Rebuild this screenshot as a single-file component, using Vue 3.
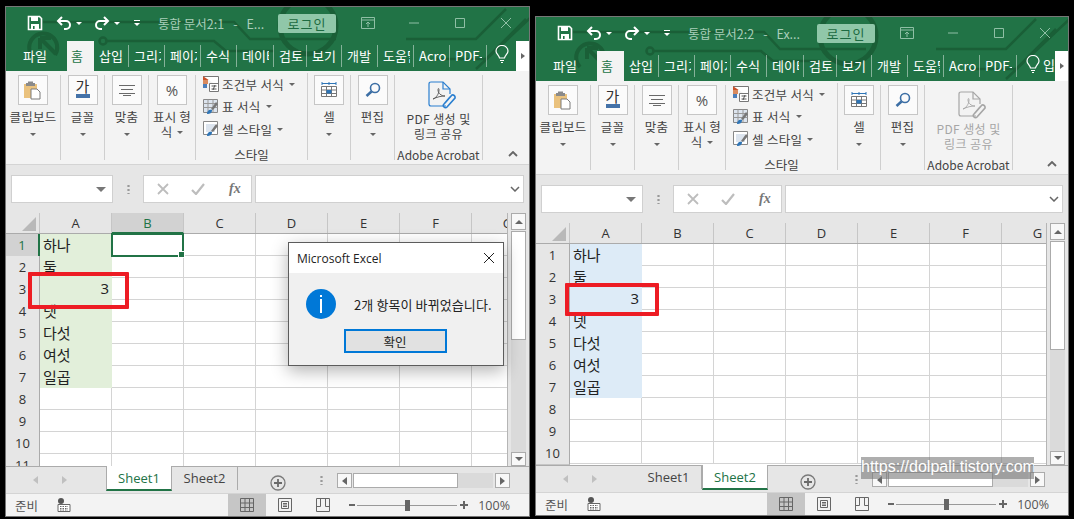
<script setup>
const cols = ['A', 'B', 'C', 'D', 'E', 'F', 'G']
const values = ['하나', '둘', '3', '넷', '다섯', '여섯', '일곱']
const tabs = [
  { t: '파일', c: 'file' }, { t: '홈', c: 'on' }, { t: '삽입', c: 'w35' }, { t: '그리기', c: 'w36' },
  { t: '페이지', c: 'w36' }, { t: '수식', c: 'w36' }, { t: '데이터', c: 'w37' }, { t: '검토', c: 'w33' },
  { t: '보기', c: 'w35' }, { t: '개발', c: 'w36' }, { t: '도움말', c: 'w36' }, { t: 'Acrobat', c: 'w36' },
  { t: 'PDF-XChange', c: 'w37' }
]
const windows = [
  { id: 1, title: '통합 문서2:1', suffix: 'E...', rows: 11, shade: 'green', pdfOff: false, active: 1 },
  { id: 2, title: '통합 문서2:2', suffix: 'Ex...', rows: 10, shade: 'blue', pdfOff: true, active: 2 }
]
</script>

<template>
  <div class="desk">
    <div v-for="w in windows" :key="w.id" class="win" :class="'win' + w.id">
      <svg class="circuit" viewBox="0 0 540 64" width="540" height="64">
        <g fill="none" stroke="#1a5f37" stroke-width="2.500">
          <path d="M37 15H228l16 17H330" />
          <g :transform="w.id === 1 ? '' : 'translate(17 0)'">
            <path d="M27 50a14 14 0 1 1 22 -2" stroke-width="4" />
            <path d="M34 31l16 16M34 31h11M34 31v11" stroke-width="4" />
            <circle cx="97" cy="34" r="3.500" />
            <path d="M101 34H208l12 10H268" />
          </g>
          <circle :cx="w.id === 1 ? 302 : 312" cy="19" r="28" stroke-width="5" />
          <path d="M400 32H470L500 2M430 52H480L520 12M470 62L540 -4" />
        </g>
      </svg>

      <div class="titlebar">
        <svg class="qat-save" viewBox="0 0 16 16" width="16" height="16">
          <path d="M1.500 1.500h11l2 2v11h-13z" fill="none" stroke="#fff" stroke-width="1.600" />
          <path d="M4 1h7v5H4zM4 9h8v6H4z" fill="#fff" />
          <path d="M6 11h1.600v3H6z" fill="#217346" />
        </svg>
        <svg class="qat-undo" viewBox="0 0 16 16" width="16" height="16">
          <path d="M6 2L2 6l4 4M2 6h8a4 4 0 0 1 0 8H8" fill="none" stroke="#fff" stroke-width="2" />
        </svg>
        <i class="caret white undo-caret"></i>
        <svg class="qat-redo" viewBox="0 0 16 16" width="16" height="16">
          <path d="M10 2l4 4-4 4M14 6H6a4 4 0 0 0 0 8h2" fill="none" stroke="#fff" stroke-width="2" />
        </svg>
        <i class="caret white redo-caret"></i>
        <span class="qat-more"></span>
        <span class="doc-title">{{ w.title }}<span class="dash">-</span>{{ w.suffix }}</span>
        <button class="login">로그인</button>
        <svg class="wc first" viewBox="0 0 14 12" width="14" height="12">
          <path d="M.5.5h13v11H.5zM.5 3h13M7 10V5M5 7l2-2 2 2" fill="none" stroke="#8fbfa5" />
        </svg>
        <svg class="wc" viewBox="0 0 14 12" width="14" height="12"><path d="M2 6h10" stroke="#8fbfa5" /></svg>
        <svg class="wc" viewBox="0 0 14 12" width="14" height="12"><path d="M2.500 1.500h9v9h-9z" fill="none" stroke="#8fbfa5" /></svg>
        <svg class="wc" viewBox="0 0 14 12" width="14" height="12"><path d="M2 1l10 10M12 1L2 11" stroke="#8fbfa5" /></svg>
      </div>

      <div class="tabs">
        <div v-for="t in tabs" :key="t.t" class="tab" :class="t.c"><span>{{ t.t }}</span></div>
        <svg class="bulb" viewBox="0 0 14 18" width="14" height="18">
          <path d="M4.500 13C4 10 1 9 1 6a6 5.500 0 0 1 12 0c0 3-3 4-3.500 7zM5 15.500h4M6 17.500h2" fill="none" stroke="#fff" stroke-width="1.200" />
        </svg>
        <span v-if="w.id === 2" class="tell">입</span>
        <div class="tab-next"><i></i></div>
      </div>

      <div class="ribbon">
        <div class="group g55">
          <div class="big">
            <svg viewBox="0 0 20 20" width="20" height="20">
              <path d="M1 4h13v14H1z" fill="#eac27e" />
              <path d="M5 1.500h5V3h2v3H3V3h2z" fill="#8a8a8a" />
              <path d="M8 9h6l3 3v7H8z" fill="#fff" stroke="#7a7a7a" />
            </svg>
          </div>
          <div class="label">클립보드</div>
          <i class="caret"></i>
        </div>
        <div class="group g44">
          <div class="big font-btn"><span>가</span><b></b></div>
          <div class="label">글꼴</div>
          <i class="caret"></i>
        </div>
        <div class="group g44">
          <div class="big">
            <svg viewBox="0 0 16 12" width="16" height="12">
              <path d="M0 1.500h16M2 5.500h12M0 9.500h16M4 11.500h8" stroke="#6a6a6a" />
            </svg>
          </div>
          <div class="label">맞춤</div>
          <i class="caret"></i>
        </div>
        <div class="group g47">
          <div class="big pct">%</div>
          <div class="label wrap">표시 형<br />식<i class="caret inline"></i></div>
        </div>
        <div class="group g112 styles">
          <div class="style-row">
            <svg viewBox="0 0 16 16" width="16" height="16">
              <path d="M0 0h7v4H0z" fill="#c8502a" />
              <path d="M0 4h5v4H0z" fill="#d98a5e" />
              <path d="M0 8h4v4H0z" fill="#4a7ebb" />
              <path d="M.5.500h15v10M6.500 7.500h9v8h-9z" fill="#fff" stroke="#777" />
              <path d="M8.500 10h5M8.500 13h5M12 9l-2 5" stroke="#555" />
            </svg>
            <span>조건부 서식</span><i class="caret inline"></i>
          </div>
          <div class="style-row">
            <svg viewBox="0 0 16 16" width="16" height="16">
              <path d="M.5.500h14v13H.5z" fill="#dce4ee" stroke="#888" />
              <path d="M.5 4.500h14M.5 8.500h14M5 .5v13M10 .5v13" stroke="#999" />
              <path d="M15 5l-5 6-2-1 5-7z" fill="#777" />
              <path d="M4 15c0-3 2-5 5-4 0 3-2 4-5 4z" fill="#2e75b6" />
            </svg>
            <span>표 서식</span><i class="caret inline"></i>
          </div>
          <div class="style-row">
            <svg viewBox="0 0 16 16" width="16" height="16">
              <path d="M.5.500h14v13H.5z" fill="#fff" stroke="#888" />
              <path d="M3 3h9v8H3z" fill="#dce4ee" />
              <path d="M15 5l-5 6-2-1 5-7z" fill="#777" />
              <path d="M4 15c0-3 2-5 5-4 0 3-2 4-5 4z" fill="#2e75b6" />
            </svg>
            <span>셀 스타일</span><i class="caret inline"></i>
          </div>
          <div class="group-name">스타일</div>
        </div>
        <div class="group g43">
          <div class="big">
            <svg viewBox="0 0 16 18" width="16" height="18">
              <path d="M.5 5.500h15v10H.5zM.5 9h15M.5 12.500h15M5.500 5.500v10M10.500 5.500v10" fill="#fff" stroke="#777" />
              <path d="M5.500 9h5v3.500h-5z" fill="#2e75b6" />
              <path d="M1 2.500h14M1 1v3M15 1v3M8 1v3" stroke="#2e75b6" />
            </svg>
          </div>
          <div class="label">셀</div>
          <i class="caret"></i>
        </div>
        <div class="group g44">
          <div class="big">
            <svg viewBox="0 0 16 16" width="16" height="16">
              <circle cx="10" cy="6" r="4.500" fill="none" stroke="#3d6fa5" stroke-width="1.600" />
              <path d="M6.500 9.500L1.500 14" stroke="#3d6fa5" stroke-width="2.600" />
            </svg>
          </div>
          <div class="label">편집</div>
          <i class="caret"></i>
        </div>
        <div class="group g88 acrobat" :class="{ off: w.pdfOff }">
          <svg class="pdf-icon" viewBox="0 0 28 30" width="28" height="30">
            <g fill="none" :stroke="w.pdfOff ? '#a6a6a6' : '#2a7fd0'" stroke-width="1.200">
              <path d="M18 25H3q-2 0-2-2V3q0-2 2-2h12l7 7v5" />
              <path d="M15 1v7h7" />
              <path d="M5 18c3-1 6-5 6-9 0-2-1-2-1 0 0 3 3 6 7 6-4 0-8 1-12 3z" :stroke="w.pdfOff ? '#a6a6a6' : '#555'" stroke-width=".9" />
              <path d="M17 22l7-8a2.500 2.500 0 0 1 3 3l-8 9a2 2 0 0 1-3-3l6-7" stroke-width="1.600" />
            </g>
          </svg>
          <div class="pdf-label">PDF 생성 및<br />링크 공유</div>
          <div class="group-name">Adobe Acrobat</div>
        </div>
        <svg class="collapse" viewBox="0 0 10 6" width="10" height="6">
          <path d="M1 5l4-4 4 4" fill="none" stroke="#666" stroke-width="1.800" />
        </svg>
      </div>

      <div class="formula">
        <div class="namebox"><i class="caret grey"></i></div>
        <span class="vdots"></span>
        <div class="fxbox">
          <svg viewBox="0 0 12 12" width="12" height="12"><path d="M1 1l10 10M11 1L1 11" stroke="#bdbdbd" stroke-width="1.800" /></svg>
          <svg viewBox="0 0 14 12" width="14" height="12"><path d="M1 7l4 4 8-10" fill="none" stroke="#bdbdbd" stroke-width="2.200" /></svg>
          <em>fx</em>
        </div>
        <div class="input">
          <svg viewBox="0 0 10 6" width="10" height="6"><path d="M1 1l4 4 4-4" fill="none" stroke="#666" stroke-width="1.500" /></svg>
        </div>
      </div>

      <div class="sheet-wrap">
        <div class="sheet">
          <div class="head-row">
            <div class="corner"><b></b></div>
            <div v-for="c in cols" :key="c" class="col-head" :class="{ sel: w.active === 1 && c === 'B' }">{{ c }}</div>
          </div>
          <div v-for="r in w.rows" :key="r" class="row">
            <div class="row-head" :class="{ sel: w.active === 1 && r === 1 }">{{ r }}</div>
            <div
              v-for="c in cols"
              :key="c"
              class="cell"
              :class="[c === 'A' && r <= 7 ? w.shade : '', { num: c === 'A' && r === 3 }]"
            >
              <template v-if="c === 'A' && r <= 7">{{ values[r - 1] }}</template>
              <div v-if="w.active === 1 && c === 'B' && r === 1" class="selected"><b></b></div>
            </div>
          </div>
        </div>
        <div class="vscroll">
          <div class="vbtn"><i class="tri up"></i></div>
          <div class="vthumb"></div>
          <div class="vtrack"></div>
          <div class="vbtn last"><i class="tri"></i></div>
        </div>
      </div>

      <div class="sheetbar">
        <div class="nav"><i class="tri left"></i><i class="tri right"></i></div>
        <div class="stab" :class="{ on: w.active === 1 }">Sheet1</div>
        <div class="stab" :class="{ on: w.active === 2 }">Sheet2</div>
        <div class="plus">
          <svg viewBox="0 0 16 16" width="16" height="16">
            <circle cx="8" cy="8" r="7" fill="none" stroke="#7a7a7a" stroke-width="1.300" />
            <path d="M4 8h8M8 4v8" stroke="#6a6a6a" stroke-width="1.800" />
          </svg>
        </div>
        <span class="vdots small"></span>
        <div class="hscroll">
          <div class="hbtn"><i class="tri left dark"></i></div>
          <div class="hthumb"></div>
          <div class="htrack"></div>
          <div class="hbtn"><i class="tri right dark"></i></div>
        </div>
      </div>

      <div class="statusbar">
        <span class="ready">준비</span>
        <svg class="macro" viewBox="0 0 14 14" width="14" height="14">
          <circle cx="4" cy="3" r="3" fill="#555" />
          <path d="M1 6.500h12v7H1z" fill="#fff" stroke="#666" />
          <path d="M3 8.500h8M3 10.500h8M3 12h8" stroke="#666" stroke-dasharray="1.500 1" />
        </svg>
        <div class="views">
          <div class="view on">
            <svg viewBox="0 0 14 14" width="14" height="14"><path d="M.5.500h13v13H.5zM.5 5h13M.5 9.500h13M5 .5v13M9.500.5v13" fill="none" stroke="#666" /></svg>
          </div>
          <div class="view">
            <svg viewBox="0 0 14 14" width="14" height="14"><path d="M.5.500h13v13H.5zM3.500 3.500h7v7h-7zM5 5.500h4M5 7h4M5 8.500h4" fill="none" stroke="#666" /></svg>
          </div>
          <div class="view">
            <svg viewBox="0 0 14 14" width="14" height="14"><path d="M.5.500h13v13H.5zM.5 8.500h4V.5M9.500.5v8h4" fill="none" stroke="#666" /></svg>
          </div>
        </div>
        <div class="zoombar">
          <b class="minus"></b>
          <div class="slider"><u></u></div>
          <b class="pls"></b>
        </div>
        <span class="percent">100%</span>
      </div>

      <div class="redbox"></div>

      <div v-if="w.id === 1" class="dialog">
        <div class="dlg-title">
          <span>Microsoft Excel</span>
          <svg viewBox="0 0 12 12" width="12" height="12"><path d="M1 1l10 10M11 1L1 11" stroke="#222" /></svg>
        </div>
        <div class="dlg-body">
          <div class="dlg-msg">
            <div class="info"><i></i><b></b></div>
            <span>2개 항목이 바뀌었습니다.</span>
          </div>
          <button class="ok">확인</button>
        </div>
      </div>

      <div v-if="w.id === 2" class="watermark">https://dolpali.tistory.com</div>
    </div>
  </div>
</template>

<style>
html, body {
  margin: 0;
  background: #000;
}
</style>

<style scoped>
.desk {
  display: flex;
  align-items: flex-start;
  gap: 5px;
  width: 1074px;
  height: 519px;
  padding-left: 5px;
  box-sizing: border-box;
  overflow: hidden;
  background: #000;
  font-family: "Noto Sans CJK KR", "Noto Sans", sans-serif;
  color: #333;
}
.win {
  position: relative;
  display: flex;
  flex-direction: column;
  box-sizing: border-box;
  border: 1px solid #777;
  background: #e6e6e6;
  overflow: hidden;
}
.win1 { width: 525px; height: 511px; margin-top: 6px; }
.win2 { width: 534px; height: 500px; margin-top: 16px; }
.circuit { position: absolute; left: 0; top: 0; z-index: 0; }

.titlebar, .tabs { position: relative; background: transparent; }
.win::before {
  content: "";
  position: absolute;
  left: 0; right: 0; top: 0;
  height: 64px;
  background: #217346;
}
.titlebar {
  display: flex;
  align-items: center;
  height: 34px;
  flex: none;
  padding-bottom: 2px;
  box-sizing: border-box;
}
.qat-save { margin-left: 21px; }
.qat-undo { margin-left: 13px; }
.qat-redo { margin-left: 12px; }
.undo-caret { margin-left: 4px; }
.redo-caret { margin-left: 4px; }
.qat-more {
  width: 6px;
  height: 5px;
  margin-left: 14px;
  border-top: 1px solid #fff;
  position: relative;
}
.qat-more::after {
  content: "";
  position: absolute;
  left: 0; top: 2px;
  border: 3px solid transparent;
  border-top-color: #fff;
}
.doc-title {
  margin-left: 18px;
  font-size: 12.500px;
  color: #a9cfba;
  white-space: nowrap;
}
.dash { margin: 0 9px; }
.login {
  margin-left: auto;
  width: 58px;
  height: 19px;
  padding: 0;
  border: 0;
  border-radius: 2px;
  background: #90c7a9;
  color: #1d6a41;
  font: 13px "Noto Sans CJK KR", sans-serif;
  letter-spacing: 1px;
}
.wc { margin-left: 32px; flex: none; }
.wc.first { margin-left: 25px; }
.wc:last-child { margin-right: 16px; }

.caret {
  display: inline-block;
  width: 0;
  height: 0;
  border: 3px solid transparent;
  border-top: 3px solid #666;
  border-bottom: 0;
}
.caret.white { border-top-color: #fff; }
.caret.grey { border-width: 5px 5px 0; border-top-color: #777; }
.caret.inline { margin-left: 5px; vertical-align: 3px; }

.tabs {
  display: flex;
  height: 30px;
  flex: none;
  font-size: 13px;
  color: #fff;
}
.tab {
  position: relative;
  display: flex;
  align-items: center;
  overflow: hidden;
  white-space: nowrap;
  padding: 0 0 2px 5px;
  box-sizing: border-box;
}
.tab span { display: block; max-width: 27px; overflow: hidden; }
.tab::after {
  content: "";
  position: absolute;
  right: 0; top: 4px; bottom: 4px;
  width: 1px;
  background: rgba(255, 255, 255, .45);
}
.tab.file { width: 61px; padding-left: 17px; }
.tab.file::after, .tab.on::after { display: none; }
.tab.on {
  width: 27px;
  background: #f3f3f3;
  color: #217346;
  padding-left: 4px;
}
.w33 { width: 33px; }
.w35 { width: 35px; }
.w36 { width: 36px; }
.w37 { width: 37px; }
.bulb { margin: 4px 0 0 8px; flex: none; }
.tell { margin-left: 3px; line-height: 27px; white-space: nowrap; }
.win2 .bulb { margin-left: 9px; }
.tab-next {
  position: absolute;
  right: 0; top: 0; bottom: 0;
  width: 13px;
  display: flex;
  align-items: center;
  justify-content: center;
  background: #fff;
}
.tab-next i {
  border: 3px solid transparent;
  border-left: 4px solid #666;
  border-right: 0;
}

.ribbon {
  position: relative;
  display: flex;
  flex: none;
  height: 94px;
  padding: 4px 0 4px;
  box-sizing: border-box;
  background: #f3f3f3;
  border-bottom: 1px solid #d4d4d4;
  font-size: 12.500px;
  color: #444;
}
.group {
  position: relative;
  display: flex;
  flex-direction: column;
  align-items: center;
  box-sizing: border-box;
  border-right: 1px solid #cfcfcf;
  height: 85px;
}
.g43 { width: 43px; }
.g44 { width: 44px; }
.g47 { width: 47px; }
.g55 { width: 55px; }
.g88 { width: 88px; }
.g112 { width: 112px; }
.big {
  display: flex;
  align-items: center;
  justify-content: center;
  width: 30px;
  height: 30px;
  box-sizing: border-box;
  border: 1px solid #c6c6c6;
  background: #fbfbfb;
  flex: none;
}
.font-btn { position: relative; font-size: 15px; line-height: 1; padding-bottom: 9px; color: #333; }
.font-btn b {
  position: absolute;
  left: 7px; right: 7px; bottom: 6px;
  height: 4px;
  background: #4472a8;
}
.pct { font: 15px "Open Sans", sans-serif; color: #555; }
.label {
  margin-top: 2px;
  height: 19px;
  line-height: 19px;
  white-space: nowrap;
  letter-spacing: .2px;
}
.label + .caret { margin-top: 7px; }
.label.wrap { height: auto; line-height: 15px; margin-top: 4px; text-align: center; }
.styles { align-items: flex-start; padding-left: 7px; margin-top: -2px; height: 87px; }
.style-row {
  display: flex;
  align-items: center;
  height: 22.500px;
  white-space: nowrap;
  letter-spacing: .3px;
}
.style-row span { margin-left: 3px; }
.group-name {
  position: absolute;
  left: 0; right: 0; bottom: -3px;
  text-align: center;
  line-height: 16px;
  font-size: 12.500px;
  white-space: nowrap;
}
.acrobat .group-name { color: #444; font-size: 12px; }
.pdf-icon { margin: 6px 0 0 6px; }
.pdf-label {
  margin-top: 0;
  line-height: 15px;
  text-align: center;
  font-size: 12px;
  letter-spacing: .4px;
}
.acrobat.off .pdf-label { color: #a6a6a6; }
.collapse { position: absolute; right: 11px; bottom: 7px; }

.formula {
  display: flex;
  flex: none;
  align-items: center;
  height: 48px;
  padding: 0 5px;
  box-sizing: border-box;
}
.namebox {
  display: flex;
  align-items: center;
  justify-content: flex-end;
  width: 102px;
  height: 28px;
  box-sizing: border-box;
  padding-right: 6px;
  background: #fff;
  border: 1px solid #d0d0d0;
}
.vdots {
  width: 3px;
  height: 10px;
  margin: 0 13px 0 14px;
  background: radial-gradient(circle, #999 1px, transparent 1.300px) 0 0 / 3px 4px;
  flex: none;
}
.fxbox {
  display: flex;
  align-items: center;
  width: 109px;
  height: 28px;
  box-sizing: border-box;
  padding-left: 13px;
  background: #fff;
  border: 1px solid #d0d0d0;
}
.fxbox svg + svg { margin-left: 22px; }
.fxbox em {
  margin-left: 24px;
  font: italic bold 14px "Liberation Serif", serif;
  color: #777;
}
.input {
  display: flex;
  align-items: center;
  justify-content: flex-end;
  flex: 1;
  height: 28px;
  margin-left: 3px;
  padding-right: 3px;
  box-sizing: border-box;
  background: #fff;
  border: 1px solid #d0d0d0;
}

.sheet-wrap {
  display: flex;
  flex: 1;
  min-height: 0;
}
.sheet {
  flex: 1;
  min-width: 0;
  overflow: hidden;
  background: #fff;
  border-right: 1px solid #b5b5b5;
}
.head-row, .row { display: flex; }
.head-row {
  height: 21px;
  background: #e6e6e6;
  border-bottom: 1px solid #ababab;
  box-sizing: border-box;
}
.corner {
  position: relative;
  width: 33px;
  flex: none;
  border-right: 1px solid #c6c6c6;
  box-sizing: content-box;
}
.corner b {
  position: absolute;
  right: 3px; bottom: 2px;
  border: 7px solid transparent;
  border-right-color: #b9b9b9;
  border-bottom-color: #b9b9b9;
}
.col-head {
  width: 72px;
  flex: none;
  box-sizing: border-box;
  border-right: 1px solid #c6c6c6;
  text-align: center;
  font: 13px/20px "Open Sans", sans-serif;
  color: #333;
}
.col-head.sel {
  background: #d2d2d2;
  color: #217346;
  border-bottom: 2px solid #217346;
  margin-bottom: -1px;
}
.row { height: 22px; flex: none; }
.row-head {
  width: 33px;
  flex: none;
  box-sizing: content-box;
  background: #e6e6e6;
  border-right: 1px solid #ababab;
  border-bottom: 1px solid #c6c6c6;
  margin-bottom: -1px;
  text-align: center;
  font: 13px/23px "Open Sans", sans-serif;
  color: #333;
}
.row-head.sel {
  background: #d2d2d2;
  color: #217346;
  border-right: 2px solid #217346;
  width: 32px;
}
.cell {
  position: relative;
  width: 72px;
  flex: none;
  box-sizing: border-box;
  border-right: 1px solid #d4d4d4;
  border-bottom: 1px solid #d4d4d4;
  padding-left: 3px;
  font-size: 15px;
  line-height: 21px;
  color: #222;
  white-space: nowrap;
}
.cell.green { background: #e2efda; border-color: #e2efda; }
.cell.blue { background: #ddebf7; border-color: #ddebf7; }
.cell.num { text-align: right; padding-right: 2px; font-family: "Open Sans", sans-serif; }
.selected {
  position: absolute;
  left: -1px; top: -1px;
  width: 73px;
  height: 24px;
  box-sizing: border-box;
  border: 2px solid #217346;
  z-index: 2;
}
.selected b {
  position: absolute;
  right: -3px; bottom: -3px;
  width: 5px;
  height: 5px;
  background: #217346;
  border: 1px solid #fff;
}

.vscroll {
  display: flex;
  flex-direction: column;
  width: 21px;
  flex: none;
  padding: 0 3px;
  box-sizing: border-box;
}
.vbtn {
  display: flex;
  align-items: center;
  justify-content: center;
  height: 17px;
  flex: none;
  background: #f8f8f8;
  border: 1px solid #ababab;
  box-sizing: border-box;
}
.vbtn.last { height: 14px; }
.vthumb {
  height: 109px;
  flex: none;
  margin-top: 1px;
  background: #fff;
  border: 1px solid #ababab;
  box-sizing: border-box;
}
.vtrack { flex: 1; background: #dadada; }
.tri {
  display: block;
  width: 0;
  height: 0;
  border: 4px solid transparent;
  border-bottom: 0;
  border-top: 4px solid #666;
}
.tri.up { border-top: 0; border-bottom: 4px solid #666; }
.tri.left, .tri.right {
  border: 4px solid transparent;
  border-right: 0;
  border-left: 5px solid #c0c0c0;
}
.tri.left { border-left: 0; border-right: 5px solid #c0c0c0; }
.tri.dark.left { border-right-color: #666; }
.tri.dark.right { border-left-color: #666; }

.sheetbar {
  display: flex;
  align-items: flex-start;
  flex: none;
  height: 27px;
  box-sizing: border-box;
  border-top: 1px solid #ababab;
  background: #e6e6e6;
}
.nav {
  display: flex;
  align-items: center;
  gap: 24px;
  width: 100px;
  height: 26px;
  padding-left: 27px;
  box-sizing: border-box;
  flex: none;
}
.stab {
  width: 66px;
  height: 24px;
  margin-top: -1px;
  flex: none;
  box-sizing: border-box;
  text-align: center;
  font: 13px/25px "Open Sans", sans-serif;
  color: #444;
  border-right: 1px solid #ababab;
}
.stab.on {
  background: #fff;
  color: #217346;
  border-left: 1px solid #ababab;
  border-bottom: 2px solid #217346;
  height: 25px;
}
.plus { margin: 5px 0 0 32px; flex: none; }
.vdots.small { margin: 8px 0 0 34px; }
.win2 .vdots.small { margin-left: 39px; }
.hscroll {
  display: flex;
  align-items: stretch;
  width: 173px;
  height: 15px;
  margin: 6px 0 0 14px;
  flex: none;
}
.hbtn {
  display: flex;
  align-items: center;
  justify-content: center;
  width: 15px;
  flex: none;
  background: #f8f8f8;
  border: 1px solid #ababab;
  box-sizing: border-box;
}
.hthumb {
  width: 105px;
  flex: none;
  margin-left: 1px;
  background: #fff;
  border: 1px solid #ababab;
  box-sizing: border-box;
}
.htrack { flex: 1; margin-right: 2px; background: #dadada; }

.statusbar {
  display: flex;
  align-items: center;
  flex: none;
  height: 23px;
  background: #f3f3f3;
  border-top: 1px solid #d4d4d4;
  box-sizing: border-box;
  font-size: 12.500px;
}
.ready { margin-left: 9px; width: 42px; color: #555; }
.macro { flex: none; }
.views { display: flex; margin-left: auto; height: 100%; }
.view {
  display: flex;
  align-items: center;
  justify-content: center;
  width: 38px;
}
.view.on { background: #c6c6c6; }
.zoombar {
  display: flex;
  align-items: center;
  margin-left: 7px;
}
.minus { width: 6px; height: 2px; background: #666; display: block; margin-right: 2px; }
.slider {
  position: relative;
  width: 100px;
  height: 1px;
  background: #999;
}
.slider u {
  position: absolute;
  left: 48px; top: -5px;
  width: 5px;
  height: 11px;
  background: #666;
}
.pls {
  position: relative;
  display: block;
  width: 8px;
  height: 2px;
  margin-left: 3px;
  background: #666;
}
.pls::after {
  content: "";
  position: absolute;
  left: 3px; top: -3px;
  width: 2px;
  height: 8px;
  background: #666;
}
.percent {
  width: 42px;
  padding-right: 19px;
  flex: none;
  text-align: right;
  font: 12.500px "Open Sans", sans-serif;
  color: #555;
}

.redbox {
  position: absolute;
  box-sizing: border-box;
  border: 4px solid #ed1c24;
  border-radius: 1px;
}
.win1 .redbox { left: 22px; top: 265px; width: 101px; height: 37px; }
.win2 .redbox { left: 29px; top: 266px; width: 94px; height: 33px; }

.dialog {
  position: absolute;
  left: 282px; top: 235px;
  width: 216px;
  height: 124px;
  box-sizing: border-box;
  display: flex;
  flex-direction: column;
  border: 1px solid #5c5c5c;
  background: #f0f0f0;
  box-shadow: 0 5px 16px rgba(0, 0, 0, .3);
}
.dlg-title {
  display: flex;
  align-items: center;
  justify-content: space-between;
  flex: none;
  height: 30px;
  padding: 0 8px;
  background: #fff;
  font: 12px "Open Sans", sans-serif;
  color: #222;
}
.dlg-body {
  flex: 1;
  display: flex;
  flex-direction: column;
  align-items: center;
}
.dlg-msg {
  align-self: flex-start;
  display: flex;
  align-items: center;
  margin: 16px 0 0 17px;
  font-size: 13px;
  letter-spacing: .1px;
  white-space: nowrap;
  color: #222;
}
.dlg-msg span { margin-left: 18px; }
.info {
  position: relative;
  width: 30px;
  height: 30px;
  border-radius: 50%;
  background: #0078d7;
  flex: none;
}
.info i, .info b {
  position: absolute;
  left: 14px;
  width: 2px;
  background: #fff;
}
.info i { top: 6px; height: 2px; }
.info b { top: 10px; height: 14px; }
.ok {
  width: 103px;
  height: 24px;
  margin-top: 10px;
  margin-right: 2px;
  padding: 0;
  box-sizing: border-box;
  border: 2px solid #0078d7;
  background: #e1e1e1;
  font: 12.500px "Noto Sans CJK KR", sans-serif;
  color: #222;
}
.watermark {
  position: absolute;
  left: 325px; top: 440px;
  width: 173px;
  height: 22px;
  background: rgba(120, 120, 120, .6);
  color: #fff;
  font: 16px/20px "Liberation Sans", sans-serif;
  white-space: nowrap;
  overflow: hidden;
}
</style>
